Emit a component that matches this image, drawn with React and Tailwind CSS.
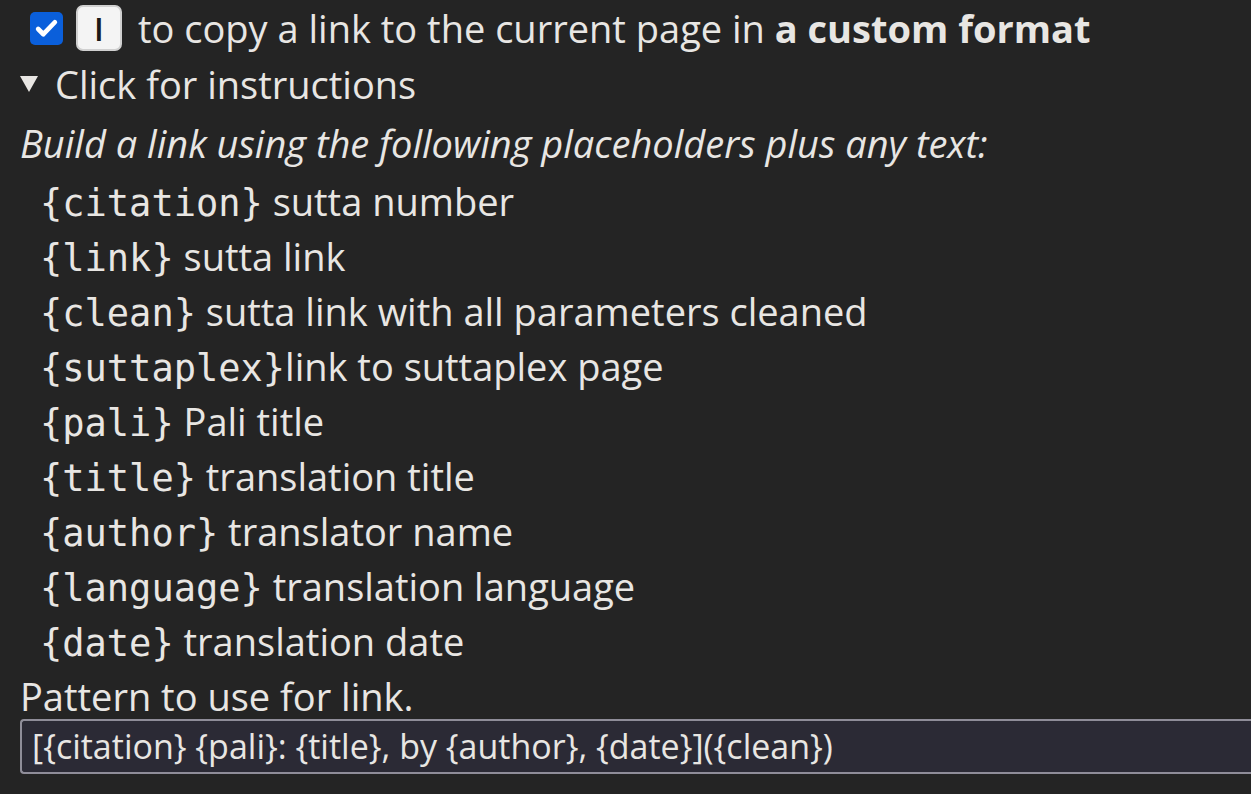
import React from 'react';

const placeholders = [
  ['{citation}', ' sutta number'],
  ['{link}', ' sutta link'],
  ['{clean}', ' sutta link with all parameters cleaned'],
  ['{suttaplex}', 'link to suttaplex page'],
  ['{pali}', ' Pali title'],
  ['{title}', ' translation title'],
  ['{author}', ' translator name'],
  ['{language}', ' translation language'],
  ['{date}', ' translation date'],
];

export default function App() {
  return (
    <div className="min-h-[794px] w-[1251px] overflow-hidden bg-[#242424] text-[#e8e6e3] font-['Open_Sans',sans-serif] text-[38px] leading-[55px]">
      <div className="flex items-center h-[56px] pl-[30px]">
        <span className="w-[33px] h-[33px] rounded-[5px] bg-[#0a5fdb] flex items-center justify-center">
          <svg width="25" height="25" viewBox="0 0 24 24" fill="none" stroke="white" strokeWidth="4.5" strokeLinecap="round" strokeLinejoin="round">
            <path d="M4 12.5l5 5L20 6" />
          </svg>
        </span>
        <kbd className="ml-[13px] w-[46px] h-[46px] rounded-[7px] bg-[#f4f4f4] border-2 border-[#d0d0d0] flex items-center justify-center text-[#1a1a1a] font-['Open_Sans',sans-serif] font-semibold text-[32px]">I</kbd>
        <span className="ml-[16px]">to copy a link to the current page in <b>a custom format</b></span>
      </div>
      <div className="flex items-center pl-[20px] h-[56px]">
        <svg width="18" height="16" viewBox="0 0 18 16" className="mr-[17px]">
          <path d="M0 0h18L9 16z" fill="#e8e6e3" />
        </svg>
        <span>Click for instructions</span>
      </div>
      <div className="pl-[20px] pt-[4px] italic">Build a link using the following placeholders plus any text:</div>
      <ul className="pl-[40px] pt-[3px]">
        {placeholders.map(([code, text]) => (
          <li key={code} className="h-[55px] whitespace-nowrap">
            <code className="font-['DejaVu_Sans_Mono',monospace] text-[37px]">{code}</code>
            {text}
          </li>
        ))}
      </ul>
      <div className="pl-[20px] h-[50px]">Pattern to use for link.</div>
      <div className="pl-[20px]">
        <div className="h-[55px] border-2 border-r-0 border-[#8f8d99] rounded-l-[4px] bg-[#2b2a35] flex items-center pl-[10px] text-[34px]">
          [{'{citation}'} {'{pali}'}: {'{title}'}, by {'{author}'}, {'{date}'}]({'{clean}'})
        </div>
      </div>
    </div>
  );
}
